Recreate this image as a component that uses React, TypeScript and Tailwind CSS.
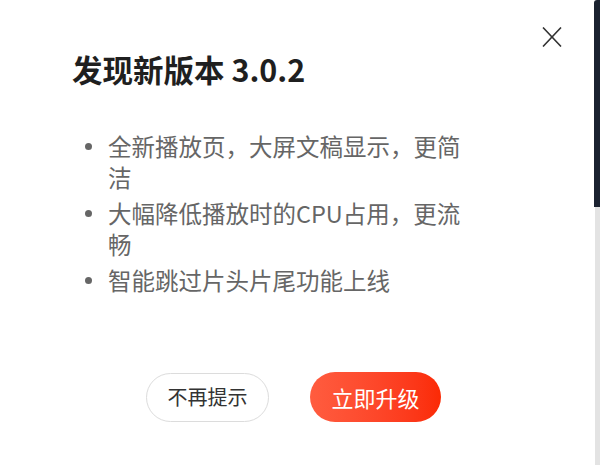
import React from "react";

const items = [
  "全新播放页，大屏文稿显示，更简洁",
  "大幅降低播放时的CPU占用，更流畅",
  "智能跳过片头片尾功能上线",
];

function CloseIcon() {
  return (
    <svg width="20" height="20" viewBox="0 0 20 20" fill="none">
      <path d="M1 0.5L19 19.5M19 0.5L1 19.5" stroke="#333" strokeWidth="1.6" />
    </svg>
  );
}

export default function App() {
  return (
    <div
      className="flex h-[465px] w-[600px] overflow-hidden bg-white"
      style={{ fontFamily: '"Noto Sans CJK SC", "Noto Sans", sans-serif' }}
    >
      {/* Dialog */}
      <div className="relative h-full w-[594px] bg-white pl-[72px] pt-[50px]">
        <button className="absolute left-[542px] top-[27px]">
          <CloseIcon />
        </button>

        <h1 className="text-[30.5px] font-bold leading-[39px] text-[#1f1f1f]">
          发现新版本 3.0.2
        </h1>

        <ul className="mt-[42px] flex flex-col gap-[5px]">
          {items.map((item) => (
            <li key={item} className="flex items-start">
              <div className="w-[36px] shrink-0">
                <span className="ml-[13px] mt-[12px] block h-[7px] w-[7px] rounded-full bg-[#666]" />
              </div>
              <p className="w-[368px] text-[23.5px] leading-[31px] text-[#666]">
                {item}
              </p>
            </li>
          ))}
        </ul>

        {/* Actions */}
        <div className="ml-[74px] mt-[76px] flex items-center gap-[41px]">
          <button className="flex h-[49px] w-[123px] items-center justify-center rounded-full border border-[#dcdcdc] bg-white text-[20px] text-[#333]">
            不再提示
          </button>
          <button className="flex h-[50px] w-[131px] items-center justify-center rounded-full bg-gradient-to-r from-[#ff5c3f] to-[#fb2a04] text-[22px] text-white">
            立即升级
          </button>
        </div>
      </div>

      {/* Edge of the window behind */}
      <div className="flex w-[6px] flex-col">
        <div className="h-[207px] rounded-tl-[3px] bg-[#1b2230]" />
        <div className="flex-1 border-l border-white bg-[#e3e3e3]" />
      </div>
    </div>
  );
}
